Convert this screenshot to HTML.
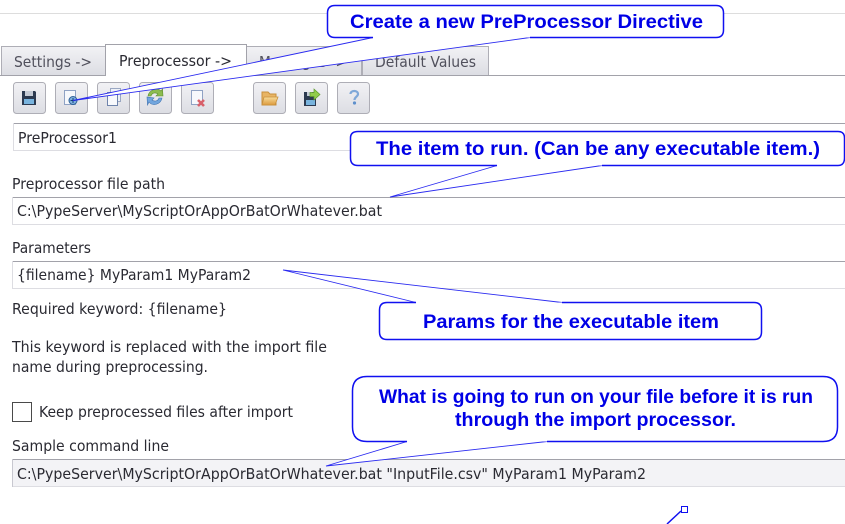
<!DOCTYPE html>
<html><head><meta charset="utf-8"><style>
html,body{margin:0;padding:0;background:#fff;width:845px;height:524px;overflow:hidden}
svg{display:block}
.t{font-family:"DejaVu Sans",sans-serif;font-size:15px;fill:#2a2a32}
.tab{font-family:"DejaVu Sans",sans-serif;font-size:15px;fill:#50505c}
.c{font-family:"Liberation Sans",sans-serif;font-size:19.500px;font-weight:bold;fill:#0000e6}
.f{fill:#fff;stroke:none}
.o{fill:none;stroke:#1010f0;stroke-width:1.500}
.l{fill:none;stroke:#2a2af0;stroke-width:.9}
.b{fill:url(#bg);stroke:#aeaeb6;stroke-width:1}
</style></head><body>
<svg width="845" height="524" viewBox="0 0 845 524" xmlns="http://www.w3.org/2000/svg">
<defs>
<linearGradient id="bg" x1="0" y1="0" x2="0" y2="1"><stop offset="0" stop-color="#f2f2f5"/><stop offset="1" stop-color="#dcdde3"/></linearGradient>
<linearGradient id="fo" x1="0" y1="0" x2="0" y2="1"><stop offset="0" stop-color="#f8dc9a"/><stop offset="1" stop-color="#dc9a3c"/></linearGradient>
</defs>
<rect x="0" y="13" width="845" height="1" fill="#dddddd"/>

<!-- tabs -->
<rect x="1.500" y="46.500" width="104" height="29" class="b"/>
<rect x="246.500" y="46.500" width="115" height="29" class="b"/>
<rect x="362.500" y="46.500" width="126" height="29" class="b"/>
<rect x="0" y="75" width="845" height="1" fill="#a2a2aa"/>
<path d="M105.500 76V44.500H246.500V75" fill="#fff" stroke="#a2a2aa"/>
<rect x="106" y="74" width="140" height="3" fill="#fff"/>
<text class="tab" x="14" y="67" textLength="78" lengthAdjust="spacingAndGlyphs">Settings -&gt;</text>
<text class="t" x="119" y="66" textLength="113" lengthAdjust="spacingAndGlyphs">Preprocessor -&gt;</text>
<text class="tab" x="259" y="67" textLength="88" lengthAdjust="spacingAndGlyphs">Messages -&gt;</text>
<text class="tab" x="375" y="67" textLength="101" lengthAdjust="spacingAndGlyphs">Default Values</text>

<!-- toolbar buttons -->
<rect x="13.500" y="82.500" width="32" height="31" rx="3" class="b"/>
<rect x="55.500" y="82.500" width="32" height="31" rx="3" class="b"/>
<rect x="97.500" y="82.500" width="32" height="31" rx="3" class="b"/>
<rect x="139.500" y="82.500" width="32" height="31" rx="3" class="b"/>
<rect x="181.500" y="82.500" width="32" height="31" rx="3" class="b"/>
<rect x="253.500" y="82.500" width="32" height="31" rx="3" class="b"/>
<rect x="295.500" y="82.500" width="32" height="31" rx="3" class="b"/>
<rect x="337.500" y="82.500" width="32" height="31" rx="3" class="b"/>

<!-- save -->
<path d="M22 91H35L36 92V105H22Z" fill="#2c3a50"/>
<rect x="25" y="91" width="8" height="5" fill="#c6ccd6"/>
<rect x="24" y="99" width="10" height="5" fill="#79b4de"/>
<!-- new -->
<path d="M64.500 90.500H75.500V104.500H64.500Z" fill="#f6f8fc" stroke="#8fa2c4"/>
<circle cx="73" cy="100.500" r="4" fill="#7fb0de" stroke="#2c5f96"/>
<path d="M70.500 100.500H75.500M73 98V103" stroke="#123f78" stroke-width="1"/>
<!-- copy -->
<path d="M110.500 88.500H120.500V101.500H110.500Z" fill="#eef1f7" stroke="#9aa7c2"/>
<path d="M107.500 92.500H117.500V105.500H107.500Z" fill="#f8f9fc" stroke="#6f84ac"/>
<!-- refresh -->
<path d="M148 96C149 90 157 87 161 91L162.500 89L163 96L156 96L158 94C155 92 152 93 151 96Z" fill="#8cbc50" stroke="#5c8c2e" stroke-width=".6"/>
<path d="M162 98C161 104 153 107 149 102L147.500 105L147 97L154 98L152 100C155 102 158 101 159 98Z" fill="#72a6de" stroke="#3e72b0" stroke-width=".6"/>
<!-- delete -->
<path d="M191.500 90.500H202.500V104.500H191.500Z" fill="#f6f8fc" stroke="#8fa2c4"/>
<path d="M198 100L204 106M204 100L198 106" stroke="#d8606a" stroke-width="2.600"/>
<!-- open -->
<path d="M262 92H268L270 94H276V105H262Z" fill="#e8b464" stroke="#c8903c"/>
<path d="M264 97H278L275 105H262Z" fill="url(#fo)" stroke="#c8903c" stroke-width=".8"/>
<!-- save as -->
<path d="M304 92H316V106H304Z" fill="#2c3a50"/>
<rect x="307" y="92" width="5" height="4" fill="#c6ccd6"/>
<rect x="306" y="100" width="9" height="5" fill="#79b4de"/>
<path d="M310 92.500H314V89L320 94.500L314 100V96.500H310Z" fill="#92cc4a" stroke="#5e9a2c" stroke-width=".7"/>
<!-- help -->
<path d="M350.500 94C350.500 90 358 90 358 94C358 96.500 354.500 97 354.500 100" fill="none" stroke="#7fa8d8" stroke-width="2.200"/>
<circle cx="354.500" cy="103" r="1.600" fill="#5f90cc"/>

<!-- field 1 -->
<rect x="13" y="123" width="832" height="28" fill="#fff"/>
<rect x="13" y="123" width="832" height="1" fill="#a2a2aa"/>
<rect x="13" y="150" width="832" height="1" fill="#dddde2"/>
<rect x="13" y="123" width="1" height="28" fill="#dddde2"/>
<text class="t" x="18" y="143" textLength="99" lengthAdjust="spacingAndGlyphs">PreProcessor1</text>

<text class="t" x="12" y="189" textLength="153" lengthAdjust="spacingAndGlyphs">Preprocessor file path</text>
<!-- field 2 -->
<rect x="12" y="197" width="833" height="1" fill="#a2a2aa"/>
<rect x="12" y="224" width="833" height="1" fill="#dddde2"/>
<rect x="12" y="197" width="1" height="28" fill="#dddde2"/>
<text class="t" x="17" y="216" textLength="365" lengthAdjust="spacingAndGlyphs">C:\PypeServer\MyScriptOrAppOrBatOrWhatever.bat</text>

<text class="t" x="12" y="253" textLength="79" lengthAdjust="spacingAndGlyphs">Parameters</text>
<!-- field 3 -->
<rect x="12" y="261" width="833" height="1" fill="#a2a2aa"/>
<rect x="12" y="288" width="833" height="1" fill="#dddde2"/>
<rect x="12" y="261" width="1" height="28" fill="#dddde2"/>
<text class="t" x="17" y="280" textLength="234" lengthAdjust="spacingAndGlyphs">{filename} MyParam1 MyParam2</text>

<text class="t" x="12" y="314" textLength="215" lengthAdjust="spacingAndGlyphs">Required keyword: {filename}</text>
<text class="t" x="12" y="352" textLength="315" lengthAdjust="spacingAndGlyphs">This keyword is replaced with the import file</text>
<text class="t" x="12" y="372" textLength="196" lengthAdjust="spacingAndGlyphs">name during preprocessing.</text>

<rect x="12.500" y="402.500" width="19" height="19" fill="#fff" stroke="#4a4a4a"/>
<text class="t" x="39" y="417" textLength="254" lengthAdjust="spacingAndGlyphs">Keep preprocessed files after import</text>
<text class="t" x="12" y="451" textLength="157" lengthAdjust="spacingAndGlyphs">Sample command line</text>

<!-- sample field -->
<rect x="12" y="459" width="833" height="28" fill="#f3f3f6"/>
<rect x="12" y="459" width="833" height="1" fill="#a2a2aa"/>
<rect x="12" y="486" width="833" height="1" fill="#dddde2"/>
<rect x="12" y="459" width="1" height="28" fill="#c8c8d0"/>
<text class="t" x="17" y="479" textLength="629" lengthAdjust="spacingAndGlyphs">C:\PypeServer\MyScriptOrAppOrBatOrWhatever.bat "InputFile.csv" MyParam1 MyParam2</text>

<!-- callouts -->
<path class="f" d="M530 37.500L73 100.500L373 37.500Z"/>
<path class="l" d="M530 37.500L73 100.500L373 37.500"/>
<path class="f" d="M335 5.500H716Q723.500 5.500 723.500 13V30Q723.500 37.500 716 37.500H335Q327.500 37.500 327.500 30V13Q327.500 5.500 335 5.500Z"/>
<path class="o" d="M373 37.500H335Q327.500 37.500 327.500 30V13Q327.500 5.500 335 5.500H716Q723.500 5.500 723.500 13V30Q723.500 37.500 716 37.500H530"/>
<text class="c" x="350" y="28" textLength="353" lengthAdjust="spacingAndGlyphs">Create a new PreProcessor Directive</text>

<path class="f" d="M602 165.500L390 197L497 165.500Z"/>
<path class="l" d="M602 165.500L390 197L497 165.500"/>
<path class="f" d="M358 131.500H838Q844.500 131.500 844.500 138V158Q844.500 165.500 838 165.500H358Q350.500 165.500 350.500 158V138Q350.500 131.500 358 131.500Z"/>
<path class="o" d="M497 165.500H358Q350.500 165.500 350.500 158V138Q350.500 131.500 358 131.500H838Q844.500 131.500 844.500 138V158Q844.500 165.500 838 165.500H602"/>
<text class="c" x="376" y="155" textLength="444" lengthAdjust="spacingAndGlyphs">The item to run. (Can be any executable item.)</text>

<path class="f" d="M416 302.500L283 270L562 302.500Z"/>
<path class="l" d="M416 302.500L283 270L562 302.500"/>
<path class="f" d="M387 302.500H754Q761.500 302.500 761.500 310V332Q761.500 339.500 754 339.500H387Q379.500 339.500 379.500 332V310Q379.500 302.500 387 302.500Z"/>
<path class="o" d="M416 302.500H387Q379.500 302.500 379.500 310V332Q379.500 339.500 387 339.500H754Q761.500 339.500 761.500 332V310Q761.500 302.500 754 302.500H562"/>
<text class="c" x="423" y="328" textLength="296" lengthAdjust="spacingAndGlyphs">Params for the executable item</text>

<path class="f" d="M547 441.500L326 466L407 441.500Z"/>
<path class="l" d="M547 441.500L326 466L407 441.500"/>
<path class="f" d="M367 376.500H823Q837.500 376.500 837.500 391V427Q837.500 441.500 823 441.500H367Q352.500 441.500 352.500 427V391Q352.500 376.500 367 376.500Z"/>
<path class="o" d="M407 441.500H367Q352.500 441.500 352.500 427V391Q352.500 376.500 367 376.500H823Q837.500 376.500 837.500 391V427Q837.500 441.500 823 441.500H547"/>
<text class="c" x="379" y="403" textLength="434" lengthAdjust="spacingAndGlyphs">What is going to run on your file before it is run</text>
<text class="c" x="455" y="426" textLength="281" lengthAdjust="spacingAndGlyphs">through the import processor.</text>

<!-- bottom handle -->
<path d="M667 524L681 511" stroke="#1010f0" stroke-width="1.500" fill="none"/>
<rect x="681.500" y="506.500" width="6" height="6" fill="#fff" stroke="#1010f0"/>
</svg>
</body></html>
